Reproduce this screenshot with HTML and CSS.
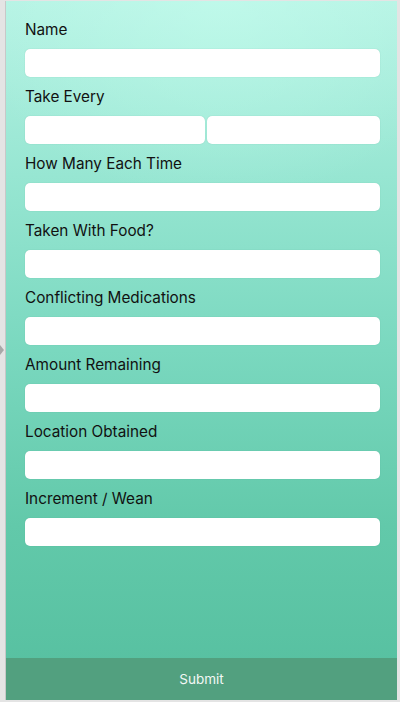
FILE: index.html
```html
<!DOCTYPE html>
<html lang="en">
<head>
  <meta charset="UTF-8">
  <meta name="viewport" content="width=device-width, initial-scale=1.0">
  <title>Add Medication</title>
  <link rel="stylesheet" href="styles.css">
</head>
<body>
  <span class="edge-arrow"></span>
  <div class="screen">
    <form id="medForm" class="med-form">
      <label for="name">Name</label>
      <input type="text" id="name" name="name">

      <label for="every">Take Every</label>
      <div class="split">
        <input type="text" id="every" name="every">
        <input type="text" id="everyUnit" name="everyUnit">
      </div>

      <label for="howMany">How Many Each Time</label>
      <input type="text" id="howMany" name="howMany">

      <label for="withFood">Taken With Food?</label>
      <input type="text" id="withFood" name="withFood">

      <label for="conflicts">Conflicting Medications</label>
      <input type="text" id="conflicts" name="conflicts">

      <label for="remaining">Amount Remaining</label>
      <input type="text" id="remaining" name="remaining">

      <label for="location">Location Obtained</label>
      <input type="text" id="location" name="location">

      <label for="wean">Increment / Wean</label>
      <input type="text" id="wean" name="wean">
    </form>
    <button type="button" class="submit">Submit</button>
  </div>
</body>
</html>
```

FILE: styles.css
```css
html, body {
  height: 100%;
}
body {
  margin: 0;
  background-color: #e4e4e4;
  font-family: Inter, "Noto Sans", sans-serif;
  color: #111;
  position: relative;
  overflow: hidden;
}
.edge-arrow {
  position: absolute;
  left: 0;
  top: 345px;
  border-top: 5px solid transparent;
  border-bottom: 5px solid transparent;
  border-left: 4px solid #a8a8a8;
}
.screen {
  box-sizing: border-box;
  height: 699px;
  margin: 1px 3px 2px 5px;
  border-left: 1px solid #c8c8c8;
  display: flex;
  flex-direction: column;
  background:
    radial-gradient(ellipse 260px 200px at 55% 0%, rgba(200, 255, 240, 0.5), rgba(200, 255, 240, 0) 100%),
    linear-gradient(to bottom, #b6f3e4 0%, #97e6d2 25%, #7ad8bf 50%, #62c9aa 75%, #55bf9f 100%);
}
.med-form {
  flex: 1;
  display: flex;
  flex-direction: column;
  padding: 19px 17px 0 19px;
}
label {
  font-size: 15.3px;
  line-height: 20px;
  margin-bottom: 9px;
}
input {
  box-sizing: border-box;
  height: 28px;
  width: 100%;
  margin: 0 0 10px;
  padding: 0 8px;
  border: none;
  border-radius: 5px;
  background-color: #ffffff;
  font-size: 15px;
  box-shadow: 0 0 1px rgba(60, 140, 120, 0.4);
}
.split {
  display: flex;
  gap: 2px;
}
.split input:first-child {
  flex: 0 0 180px;
}
.split input:last-child {
  flex: 1;
}
.submit {
  height: 42px;
  border: none;
  background-color: #52a07f;
  color: #f2f8f5;
  font-family: Inter, "Noto Sans", sans-serif;
  font-size: 13.5px;
  cursor: pointer;
}
```
